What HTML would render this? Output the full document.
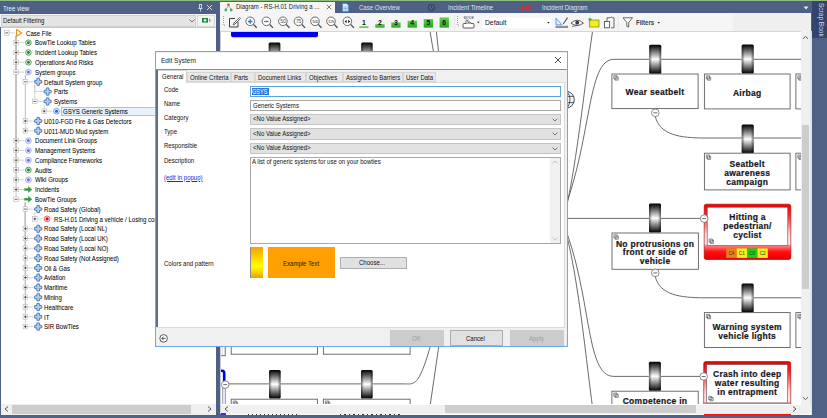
<!DOCTYPE html><html><head><meta charset="utf-8"><style>
*{margin:0;padding:0;box-sizing:border-box}
html,body{width:827px;height:418px;overflow:hidden;background:#4e6083;font-family:"Liberation Sans", sans-serif;font-size:6.2px;color:#1e1e1e}
.ab{position:absolute}
.t{position:absolute;white-space:nowrap;line-height:1}
.s{transform:scaleX(0.86);transform-origin:0 0}
</style></head><body>
<div class="ab" style="left:0px;top:0px;width:827px;height:1px;background:#8cbf7a"></div><div class="t" style="left:3.2px;top:5.6px;color:#f0f3f8;font-size:7.1px;transform:scaleX(0.86);transform-origin:0 0">Tree view</div><svg class="ab" style="left:196px;top:3px" width="20" height="10" viewBox="0 0 20 10"><path d="M3 1.5h3M3.5 1.5v4M5.5 1.5v4M2.5 5.5h4M4.5 5.5v3" stroke="#e8ecf2" stroke-width="0.8" fill="none"/><path d="M11 2l5 5M16 2l-5 5" stroke="#e8ecf2" stroke-width="0.9"/></svg><div class="ab" style="left:0px;top:14.4px;width:215.8px;height:12.6px;background:#f3f3f3"></div><div class="ab" style="left:1px;top:14.5px;width:195px;height:12px;background:#e4e4e4;border:1px solid #d0d0d0"></div><div class="t" style="left:3.2px;top:17.9px;font-size:7.1px;transform:scaleX(0.83);transform-origin:0 0;color:#111">Default Filtering</div><svg class="ab" style="left:189px;top:19px" width="6" height="4" viewBox="0 0 6 4"><path d="M0.5 0.5L3 3L5.5 0.5" stroke="#444" stroke-width="0.7" fill="none"/></svg><div class="ab" style="left:197px;top:14.5px;width:18px;height:12px;background:#f2f2f2;border:1px solid #d8d8d8"></div><svg class="ab" style="left:202px;top:17.8px" width="10" height="6" viewBox="0 0 10 6"><rect x="0" y="0" width="6" height="4.6" fill="#1f8a3a"/><rect x="1.8" y="1.3" width="2.4" height="2" fill="#fff"/><rect x="7" y="0.8" width="1.4" height="3" fill="#5cb85c"/></svg><div class="ab" style="left:1px;top:27px;width:214.8px;height:377px;background:#fff;border-top:1px solid #c8c8c8"></div><div class="ab" style="left:1px;top:404px;width:214.8px;height:10.5px;background:#f0f0f0"></div><div class="ab" style="left:11.5px;top:405px;width:179px;height:8.5px;background:#cdcdcd"></div><svg class="ab" style="left:4px;top:406px" width="5" height="6" viewBox="0 0 5 6"><path d="M4 0.5L1 3L4 5.5" stroke="#555" stroke-width="1" fill="none"/></svg><svg class="ab" style="left:207px;top:406px" width="5" height="6" viewBox="0 0 5 6"><path d="M1 0.5L4 3L1 5.5" stroke="#555" stroke-width="1" fill="none"/></svg><div class="t" style="left:25.5px;top:30.599999999999998px;font-size:7.1px;transform:scaleX(0.855);transform-origin:0 0;color:#000;-webkit-text-stroke:0.04px #000">Case File</div><div class="t" style="left:34.870000000000005px;top:40.39px;font-size:7.1px;transform:scaleX(0.855);transform-origin:0 0;color:#000;-webkit-text-stroke:0.04px #000">BowTie Lookup Tables</div><div class="t" style="left:34.870000000000005px;top:50.18px;font-size:7.1px;transform:scaleX(0.855);transform-origin:0 0;color:#000;-webkit-text-stroke:0.04px #000">Incident Lookup Tables</div><div class="t" style="left:34.870000000000005px;top:59.97px;font-size:7.1px;transform:scaleX(0.855);transform-origin:0 0;color:#000;-webkit-text-stroke:0.04px #000">Operations And Risks</div><div class="t" style="left:34.870000000000005px;top:69.76px;font-size:7.1px;transform:scaleX(0.855);transform-origin:0 0;color:#000;-webkit-text-stroke:0.04px #000">System groups</div><div class="t" style="left:44.239999999999995px;top:79.55px;font-size:7.1px;transform:scaleX(0.855);transform-origin:0 0;color:#000;-webkit-text-stroke:0.04px #000">Default System group</div><div class="t" style="left:53.61px;top:89.33999999999999px;font-size:7.1px;transform:scaleX(0.855);transform-origin:0 0;color:#000;-webkit-text-stroke:0.04px #000">Parts</div><div class="t" style="left:53.61px;top:99.13000000000001px;font-size:7.1px;transform:scaleX(0.855);transform-origin:0 0;color:#000;-webkit-text-stroke:0.04px #000">Systems</div><div class="ab" style="left:61px;top:107.3px;width:96px;height:8.6px;background:#e5f1fb;border:0.6px solid #99c9ef"></div><div class="t" style="left:62.980000000000004px;top:108.92px;font-size:7.1px;transform:scaleX(0.855);transform-origin:0 0;color:#000;-webkit-text-stroke:0.04px #000">GSYS Generic Systems</div><div class="t" style="left:44.239999999999995px;top:118.71px;font-size:7.1px;transform:scaleX(0.855);transform-origin:0 0;color:#000;-webkit-text-stroke:0.04px #000">U010-FGD Fire &amp; Gas Detectors</div><div class="t" style="left:44.239999999999995px;top:128.49999999999997px;font-size:7.1px;transform:scaleX(0.855);transform-origin:0 0;color:#000;-webkit-text-stroke:0.04px #000">U011-MUD Mud system</div><div class="t" style="left:34.870000000000005px;top:138.29px;font-size:7.1px;transform:scaleX(0.855);transform-origin:0 0;color:#000;-webkit-text-stroke:0.04px #000">Document Link Groups</div><div class="t" style="left:34.870000000000005px;top:148.07999999999998px;font-size:7.1px;transform:scaleX(0.855);transform-origin:0 0;color:#000;-webkit-text-stroke:0.04px #000">Management Systems</div><div class="t" style="left:34.870000000000005px;top:157.86999999999998px;font-size:7.1px;transform:scaleX(0.855);transform-origin:0 0;color:#000;-webkit-text-stroke:0.04px #000">Compliance Frameworks</div><div class="t" style="left:34.870000000000005px;top:167.66px;font-size:7.1px;transform:scaleX(0.855);transform-origin:0 0;color:#000;-webkit-text-stroke:0.04px #000">Audits</div><div class="t" style="left:34.870000000000005px;top:177.45px;font-size:7.1px;transform:scaleX(0.855);transform-origin:0 0;color:#000;-webkit-text-stroke:0.04px #000">Wiki Groups</div><div class="t" style="left:34.870000000000005px;top:187.23999999999998px;font-size:7.1px;transform:scaleX(0.855);transform-origin:0 0;color:#000;-webkit-text-stroke:0.04px #000">Incidents</div><div class="t" style="left:34.870000000000005px;top:197.02999999999997px;font-size:7.1px;transform:scaleX(0.855);transform-origin:0 0;color:#000;-webkit-text-stroke:0.04px #000">BowTie Groups</div><div class="t" style="left:44.239999999999995px;top:206.81999999999996px;font-size:7.1px;transform:scaleX(0.855);transform-origin:0 0;color:#000;-webkit-text-stroke:0.04px #000">Road Safety (Global)</div><div class="t" style="left:53.61px;top:216.60999999999999px;font-size:7.1px;transform:scaleX(0.855);transform-origin:0 0;color:#000;-webkit-text-stroke:0.04px #000">RS-H.01 Driving a vehicle / Losing control</div><div class="t" style="left:44.239999999999995px;top:226.39999999999998px;font-size:7.1px;transform:scaleX(0.855);transform-origin:0 0;color:#000;-webkit-text-stroke:0.04px #000">Road Safety (Local NL)</div><div class="t" style="left:44.239999999999995px;top:236.18999999999997px;font-size:7.1px;transform:scaleX(0.855);transform-origin:0 0;color:#000;-webkit-text-stroke:0.04px #000">Road Safety (Local UK)</div><div class="t" style="left:44.239999999999995px;top:245.98px;font-size:7.1px;transform:scaleX(0.855);transform-origin:0 0;color:#000;-webkit-text-stroke:0.04px #000">Road Safety (Local NO)</div><div class="t" style="left:44.239999999999995px;top:255.76999999999998px;font-size:7.1px;transform:scaleX(0.855);transform-origin:0 0;color:#000;-webkit-text-stroke:0.04px #000">Road Safety (Not Assigned)</div><div class="t" style="left:44.239999999999995px;top:265.55999999999995px;font-size:7.1px;transform:scaleX(0.855);transform-origin:0 0;color:#000;-webkit-text-stroke:0.04px #000">Oil &amp; Gas</div><div class="t" style="left:44.239999999999995px;top:275.34999999999997px;font-size:7.1px;transform:scaleX(0.855);transform-origin:0 0;color:#000;-webkit-text-stroke:0.04px #000">Aviation</div><div class="t" style="left:44.239999999999995px;top:285.13999999999993px;font-size:7.1px;transform:scaleX(0.855);transform-origin:0 0;color:#000;-webkit-text-stroke:0.04px #000">Maritime</div><div class="t" style="left:44.239999999999995px;top:294.92999999999995px;font-size:7.1px;transform:scaleX(0.855);transform-origin:0 0;color:#000;-webkit-text-stroke:0.04px #000">Mining</div><div class="t" style="left:44.239999999999995px;top:304.71999999999997px;font-size:7.1px;transform:scaleX(0.855);transform-origin:0 0;color:#000;-webkit-text-stroke:0.04px #000">Healthcare</div><div class="t" style="left:44.239999999999995px;top:314.50999999999993px;font-size:7.1px;transform:scaleX(0.855);transform-origin:0 0;color:#000;-webkit-text-stroke:0.04px #000">IT</div><div class="t" style="left:44.239999999999995px;top:324.29999999999995px;font-size:7.1px;transform:scaleX(0.855);transform-origin:0 0;color:#000;-webkit-text-stroke:0.04px #000">SIR BowTies</div><svg class="ab" style="left:0;top:0" width="216" height="404" viewBox="0 0 216 404"><path d="M6.7 32.9H14.7" stroke="#c2c2c2" stroke-width="0.7"/><path d="M16.1 35.9V42.7" stroke="#c2c2c2" stroke-width="0.7"/><path d="M16.1 42.7H24.1" stroke="#c2c2c2" stroke-width="0.7"/><path d="M16.1 35.9V52.5" stroke="#c2c2c2" stroke-width="0.7"/><path d="M16.1 52.5H24.1" stroke="#c2c2c2" stroke-width="0.7"/><path d="M16.1 35.9V62.3" stroke="#c2c2c2" stroke-width="0.7"/><path d="M16.1 62.3H24.1" stroke="#c2c2c2" stroke-width="0.7"/><path d="M16.1 35.9V72.1" stroke="#c2c2c2" stroke-width="0.7"/><path d="M16.1 72.1H24.1" stroke="#c2c2c2" stroke-width="0.7"/><path d="M25.4 75.1V81.8" stroke="#c2c2c2" stroke-width="0.7"/><path d="M25.4 81.8H33.4" stroke="#c2c2c2" stroke-width="0.7"/><path d="M34.8 84.8V91.6" stroke="#c2c2c2" stroke-width="0.7"/><path d="M34.8 91.6H42.8" stroke="#c2c2c2" stroke-width="0.7"/><path d="M34.8 84.8V101.4" stroke="#c2c2c2" stroke-width="0.7"/><path d="M34.8 101.4H42.8" stroke="#c2c2c2" stroke-width="0.7"/><path d="M44.2 104.4V111.2" stroke="#c2c2c2" stroke-width="0.7"/><path d="M44.2 111.2H52.2" stroke="#c2c2c2" stroke-width="0.7"/><path d="M25.4 75.1V121.0" stroke="#c2c2c2" stroke-width="0.7"/><path d="M25.4 121.0H33.4" stroke="#c2c2c2" stroke-width="0.7"/><path d="M25.4 75.1V130.8" stroke="#c2c2c2" stroke-width="0.7"/><path d="M25.4 130.8H33.4" stroke="#c2c2c2" stroke-width="0.7"/><path d="M16.1 35.9V140.6" stroke="#c2c2c2" stroke-width="0.7"/><path d="M16.1 140.6H24.1" stroke="#c2c2c2" stroke-width="0.7"/><path d="M16.1 35.9V150.4" stroke="#c2c2c2" stroke-width="0.7"/><path d="M16.1 150.4H24.1" stroke="#c2c2c2" stroke-width="0.7"/><path d="M16.1 35.9V160.2" stroke="#c2c2c2" stroke-width="0.7"/><path d="M16.1 160.2H24.1" stroke="#c2c2c2" stroke-width="0.7"/><path d="M16.1 35.9V170.0" stroke="#c2c2c2" stroke-width="0.7"/><path d="M16.1 170.0H24.1" stroke="#c2c2c2" stroke-width="0.7"/><path d="M16.1 35.9V179.8" stroke="#c2c2c2" stroke-width="0.7"/><path d="M16.1 179.8H24.1" stroke="#c2c2c2" stroke-width="0.7"/><path d="M16.1 35.9V189.5" stroke="#c2c2c2" stroke-width="0.7"/><path d="M16.1 189.5H24.1" stroke="#c2c2c2" stroke-width="0.7"/><path d="M16.1 35.9V199.3" stroke="#c2c2c2" stroke-width="0.7"/><path d="M16.1 199.3H24.1" stroke="#c2c2c2" stroke-width="0.7"/><path d="M25.4 202.3V209.1" stroke="#c2c2c2" stroke-width="0.7"/><path d="M25.4 209.1H33.4" stroke="#c2c2c2" stroke-width="0.7"/><path d="M34.8 212.1V218.9" stroke="#c2c2c2" stroke-width="0.7"/><path d="M34.8 218.9H42.8" stroke="#c2c2c2" stroke-width="0.7"/><path d="M25.4 202.3V228.7" stroke="#c2c2c2" stroke-width="0.7"/><path d="M25.4 228.7H33.4" stroke="#c2c2c2" stroke-width="0.7"/><path d="M25.4 202.3V238.5" stroke="#c2c2c2" stroke-width="0.7"/><path d="M25.4 238.5H33.4" stroke="#c2c2c2" stroke-width="0.7"/><path d="M25.4 202.3V248.3" stroke="#c2c2c2" stroke-width="0.7"/><path d="M25.4 248.3H33.4" stroke="#c2c2c2" stroke-width="0.7"/><path d="M25.4 202.3V258.1" stroke="#c2c2c2" stroke-width="0.7"/><path d="M25.4 258.1H33.4" stroke="#c2c2c2" stroke-width="0.7"/><path d="M25.4 202.3V267.9" stroke="#c2c2c2" stroke-width="0.7"/><path d="M25.4 267.9H33.4" stroke="#c2c2c2" stroke-width="0.7"/><path d="M25.4 202.3V277.6" stroke="#c2c2c2" stroke-width="0.7"/><path d="M25.4 277.6H33.4" stroke="#c2c2c2" stroke-width="0.7"/><path d="M25.4 202.3V287.4" stroke="#c2c2c2" stroke-width="0.7"/><path d="M25.4 287.4H33.4" stroke="#c2c2c2" stroke-width="0.7"/><path d="M25.4 202.3V297.2" stroke="#c2c2c2" stroke-width="0.7"/><path d="M25.4 297.2H33.4" stroke="#c2c2c2" stroke-width="0.7"/><path d="M25.4 202.3V307.0" stroke="#c2c2c2" stroke-width="0.7"/><path d="M25.4 307.0H33.4" stroke="#c2c2c2" stroke-width="0.7"/><path d="M25.4 202.3V316.8" stroke="#c2c2c2" stroke-width="0.7"/><path d="M25.4 316.8H33.4" stroke="#c2c2c2" stroke-width="0.7"/><path d="M25.4 202.3V326.6" stroke="#c2c2c2" stroke-width="0.7"/><path d="M25.4 326.6H33.4" stroke="#c2c2c2" stroke-width="0.7"/><rect x="4.4" y="30.6" width="4.6" height="4.6" fill="#fff" stroke="#a9a9a9" stroke-width="0.5"/><path d="M5.3 32.9H8.1" stroke="#222" stroke-width="0.7"/><path d="M16.5 29.6L21.8 32.9L16.5 36.2Z" fill="none" stroke="#e8962a" stroke-width="1.2" stroke-linejoin="round"/><rect x="13.8" y="40.4" width="4.6" height="4.6" fill="#fff" stroke="#a9a9a9" stroke-width="0.5"/><path d="M14.7 42.7H17.5" stroke="#222" stroke-width="0.7"/><path d="M16.1 41.3V44.1" stroke="#222" stroke-width="0.7"/><circle cx="28.4" cy="42.7" r="2.8" fill="#e3f1e3" stroke="#3b9a48" stroke-width="0.9"/><circle cx="28.4" cy="42.7" r="1.4" fill="#1f7a2c"/><rect x="13.8" y="50.2" width="4.6" height="4.6" fill="#fff" stroke="#a9a9a9" stroke-width="0.5"/><path d="M14.7 52.5H17.5" stroke="#222" stroke-width="0.7"/><path d="M16.1 51.1V53.9" stroke="#222" stroke-width="0.7"/><circle cx="28.4" cy="52.5" r="2.8" fill="#e3f1e3" stroke="#3b9a48" stroke-width="0.9"/><circle cx="28.4" cy="52.5" r="1.4" fill="#1f7a2c"/><rect x="13.8" y="60.0" width="4.6" height="4.6" fill="#fff" stroke="#a9a9a9" stroke-width="0.5"/><path d="M14.7 62.3H17.5" stroke="#222" stroke-width="0.7"/><path d="M16.1 60.9V63.7" stroke="#222" stroke-width="0.7"/><circle cx="28.4" cy="62.3" r="2.8" fill="#e3f1e3" stroke="#3b9a48" stroke-width="0.9"/><circle cx="28.4" cy="62.3" r="1.4" fill="#1f7a2c"/><rect x="13.8" y="69.8" width="4.6" height="4.6" fill="#fff" stroke="#a9a9a9" stroke-width="0.5"/><path d="M14.7 72.1H17.5" stroke="#222" stroke-width="0.7"/><circle cx="28.4" cy="72.1" r="2.9" fill="#e6e8ff" stroke="#9aa2f2" stroke-width="0.8"/><circle cx="28.4" cy="72.1" r="1.5" fill="#6b6ff0"/><rect x="23.1" y="79.5" width="4.6" height="4.6" fill="#fff" stroke="#a9a9a9" stroke-width="0.5"/><path d="M24.0 81.8H26.8" stroke="#222" stroke-width="0.7"/><path d="M38.2 79.5v4.6M35.9 81.8h4.6" stroke="#4f7fb8" stroke-width="3.9" stroke-linecap="round"/><path d="M38.2 79.5v4.6M35.9 81.8h4.6" stroke="#b3cdea" stroke-width="1.9" stroke-linecap="round"/><path d="M47.6 89.3v4.6M45.3 91.6h4.6" stroke="#4f7fb8" stroke-width="3.9" stroke-linecap="round"/><path d="M47.6 89.3v4.6M45.3 91.6h4.6" stroke="#b3cdea" stroke-width="1.9" stroke-linecap="round"/><rect x="32.5" y="99.1" width="4.6" height="4.6" fill="#fff" stroke="#a9a9a9" stroke-width="0.5"/><path d="M33.4 101.4H36.2" stroke="#222" stroke-width="0.7"/><path d="M47.6 99.1v4.6M45.3 101.4h4.6" stroke="#4f7fb8" stroke-width="3.9" stroke-linecap="round"/><path d="M47.6 99.1v4.6M45.3 101.4h4.6" stroke="#b3cdea" stroke-width="1.9" stroke-linecap="round"/><rect x="41.9" y="108.9" width="4.6" height="4.6" fill="#fff" stroke="#a9a9a9" stroke-width="0.5"/><path d="M42.8 111.2H45.6" stroke="#222" stroke-width="0.7"/><path d="M44.2 109.8V112.6" stroke="#222" stroke-width="0.7"/><circle cx="56.5" cy="111.2" r="2.9" fill="#e6eeff" stroke="#5b8be0" stroke-width="0.8"/><circle cx="56.5" cy="111.2" r="1.5" fill="#2a5fd0"/><rect x="23.1" y="118.7" width="4.6" height="4.6" fill="#fff" stroke="#a9a9a9" stroke-width="0.5"/><path d="M24.0 121.0H26.8" stroke="#222" stroke-width="0.7"/><path d="M25.4 119.6V122.4" stroke="#222" stroke-width="0.7"/><path d="M38.2 118.7v4.6M35.9 121.0h4.6" stroke="#4f7fb8" stroke-width="3.9" stroke-linecap="round"/><path d="M38.2 118.7v4.6M35.9 121.0h4.6" stroke="#b3cdea" stroke-width="1.9" stroke-linecap="round"/><rect x="23.1" y="128.5" width="4.6" height="4.6" fill="#fff" stroke="#a9a9a9" stroke-width="0.5"/><path d="M24.0 130.8H26.8" stroke="#222" stroke-width="0.7"/><path d="M25.4 129.4V132.2" stroke="#222" stroke-width="0.7"/><path d="M38.2 128.5v4.6M35.9 130.8h4.6" stroke="#4f7fb8" stroke-width="3.9" stroke-linecap="round"/><path d="M38.2 128.5v4.6M35.9 130.8h4.6" stroke="#b3cdea" stroke-width="1.9" stroke-linecap="round"/><rect x="13.8" y="138.3" width="4.6" height="4.6" fill="#fff" stroke="#a9a9a9" stroke-width="0.5"/><path d="M14.7 140.6H17.5" stroke="#222" stroke-width="0.7"/><path d="M16.1 139.2V142.0" stroke="#222" stroke-width="0.7"/><circle cx="28.4" cy="140.6" r="2.9" fill="#e6e8ff" stroke="#9aa2f2" stroke-width="0.8"/><circle cx="28.4" cy="140.6" r="1.5" fill="#6b6ff0"/><rect x="13.8" y="148.1" width="4.6" height="4.6" fill="#fff" stroke="#a9a9a9" stroke-width="0.5"/><path d="M14.7 150.4H17.5" stroke="#222" stroke-width="0.7"/><path d="M16.1 149.0V151.8" stroke="#222" stroke-width="0.7"/><circle cx="28.4" cy="150.4" r="2.9" fill="#e6e8ff" stroke="#9aa2f2" stroke-width="0.8"/><circle cx="28.4" cy="150.4" r="1.5" fill="#6b6ff0"/><rect x="13.8" y="157.9" width="4.6" height="4.6" fill="#fff" stroke="#a9a9a9" stroke-width="0.5"/><path d="M14.7 160.2H17.5" stroke="#222" stroke-width="0.7"/><path d="M16.1 158.8V161.6" stroke="#222" stroke-width="0.7"/><circle cx="28.4" cy="160.2" r="2.9" fill="#e6e8ff" stroke="#9aa2f2" stroke-width="0.8"/><circle cx="28.4" cy="160.2" r="1.5" fill="#6b6ff0"/><rect x="13.8" y="167.7" width="4.6" height="4.6" fill="#fff" stroke="#a9a9a9" stroke-width="0.5"/><path d="M14.7 170.0H17.5" stroke="#222" stroke-width="0.7"/><path d="M16.1 168.6V171.4" stroke="#222" stroke-width="0.7"/><circle cx="28.4" cy="170.0" r="2.8" fill="#e3f1e3" stroke="#3b9a48" stroke-width="0.9"/><circle cx="28.4" cy="170.0" r="1.4" fill="#1f7a2c"/><rect x="13.8" y="177.4" width="4.6" height="4.6" fill="#fff" stroke="#a9a9a9" stroke-width="0.5"/><path d="M14.7 179.8H17.5" stroke="#222" stroke-width="0.7"/><path d="M16.1 178.3V181.2" stroke="#222" stroke-width="0.7"/><circle cx="28.4" cy="179.8" r="2.9" fill="#e6e8ff" stroke="#9aa2f2" stroke-width="0.8"/><circle cx="28.4" cy="179.8" r="1.5" fill="#6b6ff0"/><rect x="13.8" y="187.2" width="4.6" height="4.6" fill="#fff" stroke="#a9a9a9" stroke-width="0.5"/><path d="M14.7 189.5H17.5" stroke="#222" stroke-width="0.7"/><path d="M16.1 188.1V190.9" stroke="#222" stroke-width="0.7"/><path d="M24.4 188.5h4v-2l3.5 3l-3.5 3v-2h-4z" fill="#2ea043" stroke="#1f7a2c" stroke-width="0.3"/><rect x="13.8" y="197.0" width="4.6" height="4.6" fill="#fff" stroke="#a9a9a9" stroke-width="0.5"/><path d="M14.7 199.3H17.5" stroke="#222" stroke-width="0.7"/><path d="M24.4 198.3h4v-2l3.5 3l-3.5 3v-2h-4z" fill="#2ea043" stroke="#1f7a2c" stroke-width="0.3"/><rect x="23.1" y="206.8" width="4.6" height="4.6" fill="#fff" stroke="#a9a9a9" stroke-width="0.5"/><path d="M24.0 209.1H26.8" stroke="#222" stroke-width="0.7"/><path d="M38.2 206.8v4.6M35.9 209.1h4.6" stroke="#4f7fb8" stroke-width="3.9" stroke-linecap="round"/><path d="M38.2 206.8v4.6M35.9 209.1h4.6" stroke="#b3cdea" stroke-width="1.9" stroke-linecap="round"/><rect x="32.5" y="216.6" width="4.6" height="4.6" fill="#fff" stroke="#a9a9a9" stroke-width="0.5"/><path d="M33.4 218.9H36.2" stroke="#222" stroke-width="0.7"/><path d="M34.8 217.5V220.3" stroke="#222" stroke-width="0.7"/><circle cx="47.1" cy="218.9" r="2.9" fill="#ffe6e6" stroke="#e05050" stroke-width="0.8"/><circle cx="47.1" cy="218.9" r="1.6" fill="#e01010"/><rect x="23.1" y="226.4" width="4.6" height="4.6" fill="#fff" stroke="#a9a9a9" stroke-width="0.5"/><path d="M24.0 228.7H26.8" stroke="#222" stroke-width="0.7"/><path d="M25.4 227.3V230.1" stroke="#222" stroke-width="0.7"/><path d="M38.2 226.4v4.6M35.9 228.7h4.6" stroke="#4f7fb8" stroke-width="3.9" stroke-linecap="round"/><path d="M38.2 226.4v4.6M35.9 228.7h4.6" stroke="#b3cdea" stroke-width="1.9" stroke-linecap="round"/><rect x="23.1" y="236.2" width="4.6" height="4.6" fill="#fff" stroke="#a9a9a9" stroke-width="0.5"/><path d="M24.0 238.5H26.8" stroke="#222" stroke-width="0.7"/><path d="M25.4 237.1V239.9" stroke="#222" stroke-width="0.7"/><path d="M38.2 236.2v4.6M35.9 238.5h4.6" stroke="#4f7fb8" stroke-width="3.9" stroke-linecap="round"/><path d="M38.2 236.2v4.6M35.9 238.5h4.6" stroke="#b3cdea" stroke-width="1.9" stroke-linecap="round"/><rect x="23.1" y="246.0" width="4.6" height="4.6" fill="#fff" stroke="#a9a9a9" stroke-width="0.5"/><path d="M24.0 248.3H26.8" stroke="#222" stroke-width="0.7"/><path d="M25.4 246.9V249.7" stroke="#222" stroke-width="0.7"/><path d="M38.2 246.0v4.6M35.9 248.3h4.6" stroke="#4f7fb8" stroke-width="3.9" stroke-linecap="round"/><path d="M38.2 246.0v4.6M35.9 248.3h4.6" stroke="#b3cdea" stroke-width="1.9" stroke-linecap="round"/><rect x="23.1" y="255.8" width="4.6" height="4.6" fill="#fff" stroke="#a9a9a9" stroke-width="0.5"/><path d="M24.0 258.1H26.8" stroke="#222" stroke-width="0.7"/><path d="M25.4 256.7V259.5" stroke="#222" stroke-width="0.7"/><path d="M38.2 255.8v4.6M35.9 258.1h4.6" stroke="#4f7fb8" stroke-width="3.9" stroke-linecap="round"/><path d="M38.2 255.8v4.6M35.9 258.1h4.6" stroke="#b3cdea" stroke-width="1.9" stroke-linecap="round"/><rect x="23.1" y="265.6" width="4.6" height="4.6" fill="#fff" stroke="#a9a9a9" stroke-width="0.5"/><path d="M24.0 267.9H26.8" stroke="#222" stroke-width="0.7"/><path d="M25.4 266.5V269.3" stroke="#222" stroke-width="0.7"/><path d="M38.2 265.6v4.6M35.9 267.9h4.6" stroke="#4f7fb8" stroke-width="3.9" stroke-linecap="round"/><path d="M38.2 265.6v4.6M35.9 267.9h4.6" stroke="#b3cdea" stroke-width="1.9" stroke-linecap="round"/><rect x="23.1" y="275.3" width="4.6" height="4.6" fill="#fff" stroke="#a9a9a9" stroke-width="0.5"/><path d="M24.0 277.6H26.8" stroke="#222" stroke-width="0.7"/><path d="M25.4 276.2V279.0" stroke="#222" stroke-width="0.7"/><path d="M38.2 275.3v4.6M35.9 277.6h4.6" stroke="#4f7fb8" stroke-width="3.9" stroke-linecap="round"/><path d="M38.2 275.3v4.6M35.9 277.6h4.6" stroke="#b3cdea" stroke-width="1.9" stroke-linecap="round"/><rect x="23.1" y="285.1" width="4.6" height="4.6" fill="#fff" stroke="#a9a9a9" stroke-width="0.5"/><path d="M24.0 287.4H26.8" stroke="#222" stroke-width="0.7"/><path d="M25.4 286.0V288.8" stroke="#222" stroke-width="0.7"/><path d="M38.2 285.1v4.6M35.9 287.4h4.6" stroke="#4f7fb8" stroke-width="3.9" stroke-linecap="round"/><path d="M38.2 285.1v4.6M35.9 287.4h4.6" stroke="#b3cdea" stroke-width="1.9" stroke-linecap="round"/><rect x="23.1" y="294.9" width="4.6" height="4.6" fill="#fff" stroke="#a9a9a9" stroke-width="0.5"/><path d="M24.0 297.2H26.8" stroke="#222" stroke-width="0.7"/><path d="M25.4 295.8V298.6" stroke="#222" stroke-width="0.7"/><path d="M38.2 294.9v4.6M35.9 297.2h4.6" stroke="#4f7fb8" stroke-width="3.9" stroke-linecap="round"/><path d="M38.2 294.9v4.6M35.9 297.2h4.6" stroke="#b3cdea" stroke-width="1.9" stroke-linecap="round"/><rect x="23.1" y="304.7" width="4.6" height="4.6" fill="#fff" stroke="#a9a9a9" stroke-width="0.5"/><path d="M24.0 307.0H26.8" stroke="#222" stroke-width="0.7"/><path d="M25.4 305.6V308.4" stroke="#222" stroke-width="0.7"/><path d="M38.2 304.7v4.6M35.9 307.0h4.6" stroke="#4f7fb8" stroke-width="3.9" stroke-linecap="round"/><path d="M38.2 304.7v4.6M35.9 307.0h4.6" stroke="#b3cdea" stroke-width="1.9" stroke-linecap="round"/><rect x="23.1" y="314.5" width="4.6" height="4.6" fill="#fff" stroke="#a9a9a9" stroke-width="0.5"/><path d="M24.0 316.8H26.8" stroke="#222" stroke-width="0.7"/><path d="M25.4 315.4V318.2" stroke="#222" stroke-width="0.7"/><path d="M38.2 314.5v4.6M35.9 316.8h4.6" stroke="#4f7fb8" stroke-width="3.9" stroke-linecap="round"/><path d="M38.2 314.5v4.6M35.9 316.8h4.6" stroke="#b3cdea" stroke-width="1.9" stroke-linecap="round"/><rect x="23.1" y="324.3" width="4.6" height="4.6" fill="#fff" stroke="#a9a9a9" stroke-width="0.5"/><path d="M24.0 326.6H26.8" stroke="#222" stroke-width="0.7"/><path d="M25.4 325.2V328.0" stroke="#222" stroke-width="0.7"/><path d="M38.2 324.3v4.6M35.9 326.6h4.6" stroke="#4f7fb8" stroke-width="3.9" stroke-linecap="round"/><path d="M38.2 324.3v4.6M35.9 326.6h4.6" stroke="#b3cdea" stroke-width="1.9" stroke-linecap="round"/></svg><div class="ab" style="left:219.8px;top:1.8px;width:115px;height:12px;background:#f5f5f5"></div><svg class="ab" style="left:224px;top:3px" width="9" height="9" viewBox="0 0 9 9"><circle cx="4.5" cy="1.8" r="1.3" fill="#e04b2a"/><path d="M4.5 2.5L2 6.5M4.5 2.5L7 6.5" stroke="#777" stroke-width="0.6"/><circle cx="1.8" cy="7" r="1.4" fill="#3cb371"/><circle cx="7.2" cy="7" r="1.4" fill="#3cb371"/></svg><div class="t" style="left:235.5px;top:3.4px;font-size:7px;transform:scaleX(0.86);transform-origin:0 0;color:#222">Diagram - RS-H.01 Driving a ...</div><svg class="ab" style="left:326px;top:4px" width="6" height="6" viewBox="0 0 6 6"><path d="M0.8 0.8L5.2 5.2M5.2 0.8L0.8 5.2" stroke="#806a40" stroke-width="0.9"/></svg><svg class="ab" style="left:342px;top:3px" width="7" height="9" viewBox="0 0 7 9"><path d="M0.5 0.5h4l2 2v6h-6z" fill="#dce9f7" stroke="#4b86c8" stroke-width="0.7"/><path d="M1.5 4h4M1.5 5.5h4M1.5 7h4" stroke="#4b86c8" stroke-width="0.5"/></svg><div class="t" style="left:358.5px;top:3.8px;font-size:7px;transform:scaleX(0.86);transform-origin:0 0;color:#dfe5ee">Case Overview</div><svg class="ab" style="left:427px;top:3px" width="9" height="9" viewBox="0 0 9 9"><circle cx="4.5" cy="4.5" r="3.3" fill="none" stroke="#2e3a50" stroke-width="0.9"/><path d="M4.5 2.5v2.2l1.5 1" stroke="#2e3a50" stroke-width="0.8" fill="none"/></svg><div class="t" style="left:447.5px;top:3.8px;font-size:7px;transform:scaleX(0.86);transform-origin:0 0;color:#dfe5ee">Incident Timeline</div><svg class="ab" style="left:521px;top:3.5px" width="10" height="8" viewBox="0 0 10 8"><path d="M0.5 0.5L5 4L0.5 7.5zM9.5 0.5L5 4L9.5 7.5z" fill="#d0302a"/><rect x="4" y="2.5" width="2" height="3" fill="#d0302a"/></svg><div class="t" style="left:542px;top:3.8px;font-size:7px;transform:scaleX(0.86);transform-origin:0 0;color:#dfe5ee">Incident Diagram</div><svg class="ab" style="left:803px;top:6px" width="6" height="4" viewBox="0 0 6 4"><path d="M0.5 0.5h5L3 3.5z" fill="#e8ecf2"/></svg><div class="ab" style="left:220px;top:12.7px;width:591px;height:18.3px;background:#f5f5f5"></div><div class="ab" style="left:733px;top:12.7px;width:78px;height:18.3px;background:#efefef"></div><div class="ab" style="left:220px;top:30.5px;width:591px;height:1px;background:#e2e2e2"></div><svg class="ab" style="left:0;top:0" width="827" height="32" viewBox="0 0 827 32"><defs><linearGradient id="gg" x1="0" y1="0" x2="0" y2="1"><stop offset="0" stop-color="#5fd34a"/><stop offset="1" stop-color="#22a51c"/></linearGradient></defs><rect x="223.0" y="16" width="0.9" height="0.9" fill="#8a8a8a"/><rect x="223.0" y="18" width="0.9" height="0.9" fill="#8a8a8a"/><rect x="223.0" y="20" width="0.9" height="0.9" fill="#8a8a8a"/><rect x="223.0" y="22" width="0.9" height="0.9" fill="#8a8a8a"/><path d="M222.5 24.5h2v2" stroke="#999" stroke-width="0.5" fill="none"/><path d="M235 18.5H229.5V27H238V21.5" fill="none" stroke="#404040" stroke-width="1"/><path d="M239.5 17.5L234 23l-0.8 1.8l1.8-0.8l5.5-5.5z" fill="#fff" stroke="#404040" stroke-width="0.8"/><circle cx="250.2" cy="21.3" r="4.3" fill="#fff" stroke="#5a5a5a" stroke-width="0.9"/><path d="M253.4 24.4l3.3 3.3" stroke="#4a4a4a" stroke-width="1.3"/><path d="M250.2 19.3v4.4M248 21.5h4.4" stroke="#2a7ad8" stroke-width="1.3"/><circle cx="266.4" cy="21.3" r="4.3" fill="#fff" stroke="#5a5a5a" stroke-width="0.9"/><path d="M269.6 24.4l3.3 3.3" stroke="#4a4a4a" stroke-width="1.3"/><path d="M264.2 21.5h4.4" stroke="#2a7ad8" stroke-width="1.3"/><circle cx="282.9" cy="21.3" r="4.3" fill="#fff" stroke="#5a5a5a" stroke-width="0.9"/><path d="M286.1 24.4l3.3 3.3" stroke="#4a4a4a" stroke-width="1.3"/><text x="282.9" y="23.2" font-size="5" text-anchor="middle" fill="#555" font-family="Liberation Sans" letter-spacing="-0.25" stroke="#555" stroke-width="0.05">50</text><circle cx="298.5" cy="21.3" r="4.3" fill="#fff" stroke="#5a5a5a" stroke-width="0.9"/><path d="M301.7 24.4l3.3 3.3" stroke="#4a4a4a" stroke-width="1.3"/><text x="298.5" y="23.2" font-size="5" text-anchor="middle" fill="#555" font-family="Liberation Sans" letter-spacing="-0.25" stroke="#555" stroke-width="0.05">75</text><circle cx="315.0" cy="21.3" r="4.3" fill="#fff" stroke="#5a5a5a" stroke-width="0.9"/><path d="M318.2 24.4l3.3 3.3" stroke="#4a4a4a" stroke-width="1.3"/><text x="315.0" y="22.9" font-size="4.2" text-anchor="middle" fill="#555" font-family="Liberation Sans" letter-spacing="-0.25" stroke="#555" stroke-width="0.05">100</text><circle cx="331.0" cy="21.3" r="4.3" fill="#fff" stroke="#5a5a5a" stroke-width="0.9"/><path d="M334.2 24.4l3.3 3.3" stroke="#4a4a4a" stroke-width="1.3"/><text x="331.0" y="22.9" font-size="4.2" text-anchor="middle" fill="#555" font-family="Liberation Sans" letter-spacing="-0.25" stroke="#555" stroke-width="0.05">125</text><circle cx="347.4" cy="21.3" r="4.3" fill="#fff" stroke="#5a5a5a" stroke-width="0.9"/><path d="M350.6 24.4l3.3 3.3" stroke="#4a4a4a" stroke-width="1.3"/><path d="M346.6 19.8l-2 1.7l2 1.7zM348.2 19.8l2 1.7l-2 1.7z" fill="#111"/><rect x="359.2" y="26.3" width="9.3" height="1.3" fill="url(#gg)"/><text x="363.8" y="25" font-size="6.8" text-anchor="middle" fill="#111" font-family="Liberation Sans" font-weight="bold">1</text><rect x="375.3" y="24.1" width="9.3" height="3.5" fill="url(#gg)"/><text x="379.9" y="25" font-size="6.8" text-anchor="middle" fill="#111" font-family="Liberation Sans" font-weight="bold">2</text><rect x="391.3" y="22.3" width="9.3" height="5.3" fill="url(#gg)"/><text x="395.9" y="25" font-size="6.8" text-anchor="middle" fill="#111" font-family="Liberation Sans" font-weight="bold">3</text><rect x="407.6" y="20.7" width="9.3" height="6.9" fill="url(#gg)"/><text x="412.2" y="25" font-size="6.8" text-anchor="middle" fill="#111" font-family="Liberation Sans" font-weight="bold">4</text><rect x="423.7" y="19.0" width="9.3" height="8.6" fill="url(#gg)"/><text x="428.3" y="25" font-size="6.8" text-anchor="middle" fill="#111" font-family="Liberation Sans" font-weight="bold">5</text><rect x="439.6" y="17.4" width="9.3" height="10.2" fill="url(#gg)"/><text x="444.2" y="25" font-size="6.8" text-anchor="middle" fill="#111" font-family="Liberation Sans" font-weight="bold">6</text><path d="M454.7 15v15" stroke="#dcdcdc" stroke-width="0.6"/><rect x="457.0" y="16" width="0.9" height="0.9" fill="#8a8a8a"/><rect x="457.0" y="18" width="0.9" height="0.9" fill="#8a8a8a"/><rect x="457.0" y="20" width="0.9" height="0.9" fill="#8a8a8a"/><rect x="457.0" y="22" width="0.9" height="0.9" fill="#8a8a8a"/><path d="M456.5 24.5h2v2" stroke="#999" stroke-width="0.5" fill="none"/><text x="468.8" y="19.2" font-size="3.3" text-anchor="middle" fill="#333" font-family="Liberation Sans" letter-spacing="0.1">MODE</text><rect x="463" y="23.5" width="11" height="4.5" rx="1" fill="#fff" stroke="#333" stroke-width="0.8"/><path d="M466 23.5v-3l1-0.5l1 0.5v2l2-0.5l1.5 1.5" fill="#fff" stroke="#333" stroke-width="0.7"/><path d="M477 21.8h2.6l-1.3 1.4z" fill="#222"/><rect x="482.5" y="17.5" width="69" height="10.5" fill="#fff"/><path d="M547.2 22h2.6l-1.3 1.4z" fill="#222"/><path d="M556 18.2v6.6h6z" fill="#e4f0fb" stroke="#3a8ae0" stroke-width="0.8"/><path d="M567.6 17.6l-4.4 6.4" stroke="#555" stroke-width="1.1"/><rect x="555.5" y="25.8" width="12.6" height="2.2" fill="#8a8a8a"/><path d="M557 25.8v1M559 25.8v1M561 25.8v1M563 25.8v1M565 25.8v1" stroke="#ddd" stroke-width="0.4"/><path d="M571 23.2q6.2-6 12.4 0q-6.2 4.5-12.4 0z" fill="#fff" stroke="#333" stroke-width="0.8"/><circle cx="577.2" cy="22.7" r="1.9" fill="#333"/><circle cx="577.2" cy="22.7" r="0.8" fill="#3050b0"/><path d="M572 26.5l6-1.2" stroke="#333" stroke-width="0.6"/><rect x="589.5" y="20" width="9.5" height="7" fill="#f4ee1a" stroke="#6a6a20" stroke-width="0.6"/><path d="M590 17.5v3.6M588.2 19.3h3.6" stroke="#2ab02a" stroke-width="1"/><rect x="604.5" y="21.5" width="5" height="6.3" fill="#fff" stroke="#444" stroke-width="0.8"/><path d="M607 21v-3.2h3l1.3-0.8l1.3 0.8h1.4v10h-3" fill="none" stroke="#444" stroke-width="0.8"/><path d="M618.2 15v15" stroke="#dcdcdc" stroke-width="0.6"/><path d="M623 17.8h9.5l-3.8 4.6v4.8l-1.9-1v-3.8z" fill="#fff" stroke="#444" stroke-width="0.8" stroke-linejoin="round"/><path d="M657.4 22h2.6l-1.3 1.4z" fill="#222"/></svg><div class="t" style="left:485.2px;top:19.1px;font-size:7.5px;transform:scaleX(0.9);transform-origin:0 0;color:#111">Default</div><div class="t" style="left:636.4px;top:18.8px;font-size:7.2px;font-weight:bold;transform:scaleX(0.84);transform-origin:0 0;color:#3a3a4a">Filters</div><div class="ab" style="left:221px;top:31px;width:580px;height:374px;background:#fff"></div><div class="ab" style="left:219.8px;top:31px;width:1px;height:383px;background:#c9ced8"></div><svg class="ab" style="left:0;top:0" width="827" height="418" viewBox="0 0 827 418"><defs><linearGradient id="bg" x1="0" y1="0" x2="0" y2="1"><stop offset="0" stop-color="#000"/><stop offset="0.5" stop-color="#fff"/><stop offset="1" stop-color="#000"/></linearGradient><linearGradient id="bgs" x1="0" y1="0" x2="1" y2="0"><stop offset="0" stop-color="#000" stop-opacity="0.55"/><stop offset="0.25" stop-color="#000" stop-opacity="0"/><stop offset="0.75" stop-color="#000" stop-opacity="0"/><stop offset="1" stop-color="#000" stop-opacity="0.55"/></linearGradient><linearGradient id="rg" x1="0" y1="0" x2="0" y2="1"><stop offset="0" stop-color="#f00000"/><stop offset="0.18" stop-color="#ff2020"/><stop offset="0.55" stop-color="#ffd8d8"/><stop offset="0.72" stop-color="#ffe8e8"/><stop offset="0.745" stop-color="#ff8a8a"/><stop offset="0.86" stop-color="#ff1010"/><stop offset="1" stop-color="#e00000"/></linearGradient><clipPath id="dc"><rect x="221" y="32" width="580" height="372"/></clipPath><style>.bt{font-family:"Liberation Sans",sans-serif;font-weight:bold;font-size:8.5px;letter-spacing:0.28px;fill:#16161e;stroke:#16161e;stroke-width:0.2px}</style></defs><g clip-path="url(#dc)"><path d="M563 222 C578.03 164.06, 586.66 61.2, 596 10" fill="none" stroke="#5a5a5a" stroke-width="0.9"/><path d="M561 218 C592.47 141.49, 586.23 59.3, 613.98 59.3 H801" fill="none" stroke="#5a5a5a" stroke-width="0.9"/><path d="M548 218.4 H705" fill="none" stroke="#5a5a5a" stroke-width="0.9"/><path d="M561 218 C592.65 291.64, 584.32 376.4, 613.77 376.4 H705" fill="none" stroke="#5a5a5a" stroke-width="0.9"/><path d="M563 222 C579.72 274.82, 588.29 388, 596 430" fill="none" stroke="#5a5a5a" stroke-width="0.9"/><path d="M424.8 0 L436.5 70" fill="none" stroke="#5a5a5a" stroke-width="0.9"/><path d="M433 0 L440.5 70" fill="none" stroke="#5a5a5a" stroke-width="0.9"/><path d="M440 310 C420.17 389.13, 416.41 383.9, 404.6 383.9 H228" fill="none" stroke="#5a5a5a" stroke-width="0.9"/><path d="M446 297 L428 420" fill="none" stroke="#5a5a5a" stroke-width="0.9"/><rect x="222.6" y="388" width="2.9" height="26" fill="#dfe6ff" stroke="#777" stroke-width="0.6"/><circle cx="565.8" cy="99.7" r="8.5" fill="#eef4fa" stroke="#3a3a3a" stroke-width="0.9"/><path d="M558 96.4H574M558 102.6H574M567.2 91.3Q572.8 99.7 567.2 108.1" stroke="#3a3a3a" stroke-width="0.8" fill="none"/><rect x="649.2" y="44.8" width="12.0" height="29.0" rx="1.5" fill="url(#bg)"/><rect x="649.2" y="44.8" width="12.0" height="29.0" rx="1.5" fill="url(#bgs)"/><rect x="741.7" y="44.6" width="12.0" height="29.0" rx="1.5" fill="url(#bg)"/><rect x="741.7" y="44.6" width="12.0" height="29.0" rx="1.5" fill="url(#bgs)"/><rect x="611.9" y="74.0" width="86.2" height="34.6" fill="#fff" stroke="#606060" stroke-width="0.9"/><path d="M613.8 75.7h3.2v3.2h-3.2z M615.0 76.9h3.2v3.2h-3.2z" fill="#fff" stroke="#444" stroke-width="0.6"/><text x="654.9" y="95.3" text-anchor="middle" class="bt">Wear seatbelt</text><rect x="704.4" y="74.0" width="85.7" height="34.9" fill="#fff" stroke="#606060" stroke-width="0.9"/><path d="M706.3 75.8h3.2v3.2h-3.2z M707.5 77.0h3.2v3.2h-3.2z" fill="#fff" stroke="#444" stroke-width="0.6"/><text x="747.2" y="95.6" text-anchor="middle" class="bt">Airbag</text><rect x="795.9" y="74.0" width="29.1" height="34.9" fill="#fff" stroke="#606060" stroke-width="0.9"/><path d="M797.8 75.8h3.2v3.2h-3.2z M799.0 77.0h3.2v3.2h-3.2z" fill="#fff" stroke="#444" stroke-width="0.6"/><text x="810.4" y="95.6" text-anchor="middle" class="bt"></text><circle cx="655.3" cy="112.8" r="3.8" fill="#fff" stroke="#707070" stroke-width="0.8"/><path d="M653.3 112.8h4" stroke="#606060" stroke-width="0.9"/><path d="M655.3 116.6 C660 135, 680 138, 705 138 H801" fill="none" stroke="#5a5a5a" stroke-width="0.9"/><rect x="741.7" y="124.6" width="12.0" height="29.0" rx="1.5" fill="url(#bg)"/><rect x="741.7" y="124.6" width="12.0" height="29.0" rx="1.5" fill="url(#bgs)"/><rect x="704.4" y="153.2" width="85.7" height="36.7" fill="#fff" stroke="#606060" stroke-width="0.9"/><path d="M706.3 155.0h3.2v3.2h-3.2z M707.5 156.2h3.2v3.2h-3.2z" fill="#fff" stroke="#444" stroke-width="0.6"/><text x="747.2" y="166.9" text-anchor="middle" class="bt">Seatbelt</text><text x="747.2" y="175.7" text-anchor="middle" class="bt">awareness</text><text x="747.2" y="184.5" text-anchor="middle" class="bt">campaign</text><rect x="795.9" y="153.2" width="29.1" height="36.7" fill="#fff" stroke="#606060" stroke-width="0.9"/><path d="M797.8 155.0h3.2v3.2h-3.2z M799.0 156.2h3.2v3.2h-3.2z" fill="#fff" stroke="#444" stroke-width="0.6"/><text x="810.4" y="175.7" text-anchor="middle" class="bt"></text><rect x="649.0" y="203.6" width="12.0" height="29.0" rx="1.5" fill="url(#bg)"/><rect x="649.0" y="203.6" width="12.0" height="29.0" rx="1.5" fill="url(#bgs)"/><rect x="612.0" y="233.0" width="86.4" height="36.3" fill="#fff" stroke="#606060" stroke-width="0.9"/><path d="M613.9 234.8h3.2v3.2h-3.2z M615.1 236.0h3.2v3.2h-3.2z" fill="#fff" stroke="#444" stroke-width="0.6"/><text x="655.1" y="246.5" text-anchor="middle" class="bt">No protrusions on</text><text x="655.1" y="255.3" text-anchor="middle" class="bt">front or side of</text><text x="655.1" y="264.1" text-anchor="middle" class="bt">vehicle</text><circle cx="655.3" cy="272.9" r="3.8" fill="#fff" stroke="#707070" stroke-width="0.8"/><path d="M653.3 272.9h4" stroke="#606060" stroke-width="0.9"/><path d="M655.3 276.7 C660 295, 680 297.8, 705 297.8 H801" fill="none" stroke="#5a5a5a" stroke-width="0.9"/><rect x="704.2" y="204.2" width="86.6" height="55.3" rx="2" fill="url(#rg)" stroke="#a00000" stroke-width="0.6"/><rect x="707.2" y="207.2" width="80.6" height="38.3" fill="#fff" stroke="#505050" stroke-width="0.6"/><path d="M709.2 239.0h3.2v3.2h-3.2z M710.4 240.2h3.2v3.2h-3.2z" fill="#fff" stroke="#444" stroke-width="0.6"/><text x="747.5" y="219.8" text-anchor="middle" class="bt">Hitting a</text><text x="747.5" y="229.0" text-anchor="middle" class="bt">pedestrian/</text><text x="747.5" y="238.2" text-anchor="middle" class="bt">cyclist</text><rect x="726.2" y="248.4" width="10.4" height="9.5" fill="#e8801a"/><text x="731.4" y="254.9" text-anchor="middle" font-size="4.6" fill="#333" font-family="Liberation Sans">C4</text><rect x="736.6" y="248.4" width="10.4" height="9.5" fill="#f2ee1c"/><text x="741.8" y="254.9" text-anchor="middle" font-size="4.6" fill="#333" font-family="Liberation Sans">C1</text><rect x="747.0" y="248.4" width="10.4" height="9.5" fill="#18d018"/><text x="752.2" y="254.9" text-anchor="middle" font-size="4.6" fill="#333" font-family="Liberation Sans">C0</text><rect x="757.4" y="248.4" width="10.4" height="9.5" fill="#f2ee1c"/><text x="762.6" y="254.9" text-anchor="middle" font-size="4.6" fill="#333" font-family="Liberation Sans">C2</text><circle cx="704.2" cy="218.6" r="3.8" fill="#fff" stroke="#707070" stroke-width="0.8"/><path d="M702.2 218.6h4" stroke="#606060" stroke-width="0.9"/><rect x="741.6" y="283.4" width="12.0" height="29.0" rx="1.5" fill="url(#bg)"/><rect x="741.6" y="283.4" width="12.0" height="29.0" rx="1.5" fill="url(#bgs)"/><rect x="704.4" y="312.6" width="85.7" height="34.9" fill="#fff" stroke="#606060" stroke-width="0.9"/><path d="M706.3 314.4h3.2v3.2h-3.2z M707.5 315.6h3.2v3.2h-3.2z" fill="#fff" stroke="#444" stroke-width="0.6"/><text x="747.2" y="329.8" text-anchor="middle" class="bt">Warning system</text><text x="747.2" y="338.6" text-anchor="middle" class="bt">vehicle lights</text><rect x="795.9" y="312.6" width="29.1" height="34.9" fill="#fff" stroke="#606060" stroke-width="0.9"/><path d="M797.8 314.4h3.2v3.2h-3.2z M799.0 315.6h3.2v3.2h-3.2z" fill="#fff" stroke="#444" stroke-width="0.6"/><text x="810.4" y="334.2" text-anchor="middle" class="bt"></text><rect x="648.9" y="361.8" width="12.0" height="29.0" rx="1.5" fill="url(#bg)"/><rect x="648.9" y="361.8" width="12.0" height="29.0" rx="1.5" fill="url(#bgs)"/><rect x="611.9" y="391.2" width="86.3" height="17.1" fill="#fff" stroke="#606060" stroke-width="0.9"/><path d="M613.8 393.0h3.2v3.2h-3.2z M615.0 394.2h3.2v3.2h-3.2z" fill="#fff" stroke="#444" stroke-width="0.6"/><text x="655.0" y="403.9" text-anchor="middle" class="bt">Competence in</text><rect x="703.7" y="361.6" width="87.0" height="55.3" rx="2" fill="url(#rg)" stroke="#a00000" stroke-width="0.6"/><rect x="706.7" y="364.6" width="81.0" height="38.3" fill="#fff" stroke="#505050" stroke-width="0.6"/><path d="M708.7 396.4h3.2v3.2h-3.2z M709.9 397.6h3.2v3.2h-3.2z" fill="#fff" stroke="#444" stroke-width="0.6"/><text x="747.2" y="376.5" text-anchor="middle" class="bt">Crash into deep</text><text x="747.2" y="385.7" text-anchor="middle" class="bt">water resulting</text><text x="747.2" y="394.9" text-anchor="middle" class="bt">in entrapment</text><circle cx="703.7" cy="376.5" r="3.8" fill="#fff" stroke="#707070" stroke-width="0.8"/><path d="M701.7 376.5h4" stroke="#606060" stroke-width="0.9"/><rect x="200.4" y="320.4" width="24.8" height="35.3" fill="#fff" stroke="#606060" stroke-width="0.9"/><text x="212.8" y="342.2" text-anchor="middle" class="bt"></text><path d="M222.3 320 V356" fill="none" stroke="#aaa" stroke-width="0.5"/><rect x="231.2" y="320.4" width="86.3" height="33.8" fill="#fff" stroke="#606060" stroke-width="0.9"/><text x="274.4" y="341.5" text-anchor="middle" class="bt"></text><rect x="323.4" y="320.4" width="86.7" height="33.8" fill="#fff" stroke="#606060" stroke-width="0.9"/><text x="366.8" y="341.5" text-anchor="middle" class="bt"></text><path d="M215 370.8 H222 Q224.2 370.8 224.2 373 V382" fill="none" stroke="#0000ee" stroke-width="2.6"/><rect x="269.0" y="370.0" width="11.6" height="28.5" rx="1.5" fill="url(#bg)"/><rect x="269.0" y="370.0" width="11.6" height="28.5" rx="1.5" fill="url(#bgs)"/><rect x="361.0" y="370.0" width="11.6" height="28.5" rx="1.5" fill="url(#bg)"/><rect x="361.0" y="370.0" width="11.6" height="28.5" rx="1.5" fill="url(#bgs)"/><circle cx="225.2" cy="384.6" r="3.8" fill="#fff" stroke="#707070" stroke-width="0.8"/><path d="M223.2 384.6h4" stroke="#606060" stroke-width="0.9"/><rect x="231.2" y="399.2" width="86.3" height="29.1" fill="#fff" stroke="#606060" stroke-width="0.9"/><path d="M233.2 401.0h3.2v3.2h-3.2z M234.4 402.2h3.2v3.2h-3.2z" fill="#fff" stroke="#444" stroke-width="0.6"/><text x="274.4" y="417.9" text-anchor="middle" class="bt"></text><rect x="323.4" y="399.2" width="86.7" height="29.1" fill="#fff" stroke="#606060" stroke-width="0.9"/><path d="M325.4 401.0h3.2v3.2h-3.2z M326.6 402.2h3.2v3.2h-3.2z" fill="#fff" stroke="#444" stroke-width="0.6"/><text x="366.8" y="417.9" text-anchor="middle" class="bt"></text><path d="M231 31 H318 V35.3 Q318 37.3 316 37.3 H233 Q231 37.3 231 35.3 Z" fill="#0000f0"/><rect x="268.7" y="42.4" width="11.6" height="29.0" rx="1.5" fill="url(#bg)"/><rect x="268.7" y="42.4" width="11.6" height="29.0" rx="1.5" fill="url(#bgs)"/><rect x="361.2" y="42.5" width="11.4" height="29.0" rx="1.5" fill="url(#bg)"/><rect x="361.2" y="42.5" width="11.4" height="29.0" rx="1.5" fill="url(#bgs)"/></g></svg><div class="ab" style="left:221px;top:31px;width:580px;height:1.4px;background:#d6d6d6"></div><div class="ab" style="left:800.7px;top:31px;width:10px;height:374px;background:#f0f0f0"></div><div class="ab" style="left:801.5px;top:125.4px;width:7.5px;height:163.2px;background:#cdcdcd"></div><svg class="ab" style="left:802px;top:35px" width="7" height="5" viewBox="0 0 7 5"><path d="M1 4L3.5 1.2L6 4" stroke="#555" stroke-width="0.9" fill="none"/></svg><svg class="ab" style="left:802px;top:396px" width="7" height="5" viewBox="0 0 7 5"><path d="M1 1L3.5 3.8L6 1" stroke="#555" stroke-width="0.9" fill="none"/></svg><div class="ab" style="left:810px;top:31px;width:1.5px;height:384px;background:#dfe3ea"></div><div class="ab" style="left:221px;top:404.5px;width:590px;height:9px;background:#f0f0f0"></div><div class="ab" style="left:445px;top:405px;width:251px;height:8px;background:#cdcdcd"></div><svg class="ab" style="left:224px;top:406px" width="5" height="6" viewBox="0 0 5 6"><path d="M4 0.5L1 3L4 5.5" stroke="#555" stroke-width="1" fill="none"/></svg><svg class="ab" style="left:792px;top:406px" width="5" height="6" viewBox="0 0 5 6"><path d="M1 0.5L4 3L1 5.5" stroke="#555" stroke-width="1" fill="none"/></svg><div class="ab" style="left:221px;top:413.5px;width:590px;height:1.5px;background:#fcfcfc"></div><div class="ab" style="left:704px;top:413.6px;width:86.6px;height:1.2px;background:#f01010"></div><div class="ab" style="left:221px;top:413.4px;width:5px;height:1.4px;background:#3030f0"></div><div class="ab" style="left:248px;top:413.7px;width:50px;height:0.9px;background:repeating-linear-gradient(90deg,#333 0 1.2px,transparent 1.2px 4px)"></div><div class="ab" style="left:340px;top:413.7px;width:62px;height:0.9px;background:repeating-linear-gradient(90deg,#333 0 1.2px,transparent 1.2px 4.5px)"></div><div class="ab" style="left:812.3px;top:1.2px;width:14.7px;height:36.5px;background:#34446a"></div><div class="ab" style="left:816.6px;top:3px;writing-mode:vertical-rl;font-size:7.6px;line-height:8px;color:#d8dfeb;white-space:nowrap;transform:scaleY(0.86);transform-origin:0 0">Scrap Book</div><div class="ab" style="left:155.2px;top:51.4px;width:412.8px;height:296px;background:#f0f0f0;border:1.2px solid #6aaae6"></div><div class="ab" style="left:156.4px;top:52.6px;width:410.4px;height:16.4px;background:#fff"></div><div class="t" style="left:160.8px;top:56.8px;font-size:7.6px;transform:scaleX(0.86);transform-origin:0 0;color:#1a1a1a">Edit System</div><svg class="ab" style="left:554px;top:56px" width="8" height="8" viewBox="0 0 8 8"><path d="M1 1L7 7M7 1L1 7" stroke="#222" stroke-width="0.8"/></svg><div class="ab" style="left:156.4px;top:69px;width:410.4px;height:1.3px;background:#8c8c8c"></div><div class="ab" style="left:156.4px;top:70.3px;width:410.4px;height:11px;background:#f0f0f0"></div><div class="ab" style="left:157px;top:82px;width:407.5px;height:245.5px;background:#fff;border:0.7px solid #dadada"></div><div class="ab" style="left:156.4px;top:70.3px;width:1.2px;height:257px;background:#5f6f8a"></div><div class="ab" style="left:187.3px;top:71.8px;width:43.599999999999994px;height:10.4px;background:#e8e8e8;border:0.6px solid #d6d6d6"></div><div class="t" style="left:190.10000000000002px;top:74.5px;font-size:7.1px;transform:scaleX(0.85);transform-origin:0 0;color:#111">Online Criteria</div><div class="ab" style="left:230.9px;top:71.8px;width:23.900000000000006px;height:10.4px;background:#e8e8e8;border:0.6px solid #d6d6d6"></div><div class="t" style="left:233.70000000000002px;top:74.5px;font-size:7.1px;transform:scaleX(0.85);transform-origin:0 0;color:#111">Parts</div><div class="ab" style="left:254.8px;top:71.8px;width:51.5px;height:10.4px;background:#e8e8e8;border:0.6px solid #d6d6d6"></div><div class="t" style="left:257.6px;top:74.5px;font-size:7.1px;transform:scaleX(0.85);transform-origin:0 0;color:#111">Document Links</div><div class="ab" style="left:306.3px;top:71.8px;width:36.80000000000001px;height:10.4px;background:#e8e8e8;border:0.6px solid #d6d6d6"></div><div class="t" style="left:309.1px;top:74.5px;font-size:7.1px;transform:scaleX(0.85);transform-origin:0 0;color:#111">Objectives</div><div class="ab" style="left:343.1px;top:71.8px;width:59.89999999999998px;height:10.4px;background:#e8e8e8;border:0.6px solid #d6d6d6"></div><div class="t" style="left:345.90000000000003px;top:74.5px;font-size:7.1px;transform:scaleX(0.85);transform-origin:0 0;color:#111">Assigned to Barriers</div><div class="ab" style="left:403px;top:71.8px;width:33.19999999999999px;height:10.4px;background:#e8e8e8;border:0.6px solid #d6d6d6"></div><div class="t" style="left:405.8px;top:74.5px;font-size:7.1px;transform:scaleX(0.85);transform-origin:0 0;color:#111">User Data</div><div class="ab" style="left:157.6px;top:70.4px;width:29.6px;height:12.2px;background:#fff;border-top:0.6px solid #d6d6d6;border-right:0.6px solid #d6d6d6"></div><div class="t" style="left:161.8px;top:73.6px;font-size:7.1px;transform:scaleX(0.85);transform-origin:0 0;color:#111">General</div><div class="t" style="left:163.8px;top:86.5px;font-size:7.1px;transform:scaleX(0.85);transform-origin:0 0;color:#111">Code</div><div class="t" style="left:163.8px;top:100.9px;font-size:7.1px;transform:scaleX(0.85);transform-origin:0 0;color:#111">Name</div><div class="t" style="left:163.8px;top:114.7px;font-size:7.1px;transform:scaleX(0.85);transform-origin:0 0;color:#111">Category</div><div class="t" style="left:163.8px;top:129px;font-size:7.1px;transform:scaleX(0.85);transform-origin:0 0;color:#111">Type</div><div class="t" style="left:163.8px;top:143.4px;font-size:7.1px;transform:scaleX(0.85);transform-origin:0 0;color:#111">Responsible</div><div class="t" style="left:163.8px;top:157.8px;font-size:7.1px;transform:scaleX(0.85);transform-origin:0 0;color:#111">Description</div><div class="t" style="left:164.4px;top:174.5px;font-size:7.1px;transform:scaleX(0.85);transform-origin:0 0;color:#2020e0"><span style="text-decoration:underline">(edit in popup)</span></div><div class="t" style="left:164.4px;top:260.6px;font-size:7.1px;transform:scaleX(0.85);transform-origin:0 0;color:#111">Colors and pattern</div><div class="ab" style="left:250.3px;top:86.2px;width:310.3px;height:11px;background:#fff;border:1px solid #5aa2e2"></div><div class="ab" style="left:252px;top:88px;width:17px;height:7px;background:#3078d8"></div><div class="t" style="left:252.4px;top:88.7px;font-size:7.1px;transform:scaleX(0.78);transform-origin:0 0;color:#fff">GSYS</div><div class="ab" style="left:250.3px;top:100.2px;width:310.3px;height:11px;background:#fff;border:0.8px solid #a8a8a8"></div><div class="t" style="left:252.6px;top:102.6px;font-size:7.1px;transform:scaleX(0.85);transform-origin:0 0;color:#111">Generic Systems</div><div class="ab" style="left:250.3px;top:113.6px;width:310.3px;height:11.6px;background:#e1e1e1;border:0.8px solid #c4c4c4"></div><div class="t" style="left:252.8px;top:116.3px;font-size:7.1px;transform:scaleX(0.85);transform-origin:0 0;color:#111">&lt;No Value Assigned&gt;</div><svg class="ab" style="left:552px;top:117.6px" width="6" height="4" viewBox="0 0 6 4"><path d="M0.6 0.6L3 3L5.4 0.6" stroke="#555" stroke-width="0.8" fill="none"/></svg><div class="ab" style="left:250.3px;top:128.3px;width:310.3px;height:11.6px;background:#e1e1e1;border:0.8px solid #c4c4c4"></div><div class="t" style="left:252.8px;top:131.0px;font-size:7.1px;transform:scaleX(0.85);transform-origin:0 0;color:#111">&lt;No Value Assigned&gt;</div><svg class="ab" style="left:552px;top:132.3px" width="6" height="4" viewBox="0 0 6 4"><path d="M0.6 0.6L3 3L5.4 0.6" stroke="#555" stroke-width="0.8" fill="none"/></svg><div class="ab" style="left:250.3px;top:142.7px;width:310.3px;height:11.6px;background:#e1e1e1;border:0.8px solid #c4c4c4"></div><div class="t" style="left:252.8px;top:145.39999999999998px;font-size:7.1px;transform:scaleX(0.85);transform-origin:0 0;color:#111">&lt;No Value Assigned&gt;</div><svg class="ab" style="left:552px;top:146.7px" width="6" height="4" viewBox="0 0 6 4"><path d="M0.6 0.6L3 3L5.4 0.6" stroke="#555" stroke-width="0.8" fill="none"/></svg><div class="ab" style="left:250.2px;top:157.2px;width:310.4px;height:86.4px;background:#fff;border:0.8px solid #a8a8a8"></div><div class="t" style="left:252.4px;top:159.2px;font-size:7.1px;transform:scaleX(0.85);transform-origin:0 0;color:#111">A list of generic systems for use on your bowties</div><div class="ab" style="left:550.4px;top:158px;width:9.4px;height:84.8px;background:#f0f0f0"></div><svg class="ab" style="left:552px;top:160px" width="6" height="4" viewBox="0 0 6 4"><path d="M0.6 3.4L3 1L5.4 3.4" stroke="#aaa" stroke-width="0.7" fill="none"/></svg><svg class="ab" style="left:552px;top:237px" width="6" height="4" viewBox="0 0 6 4"><path d="M0.6 0.6L3 3L5.4 0.6" stroke="#aaa" stroke-width="0.7" fill="none"/></svg><div class="ab" style="left:250.3px;top:247.2px;width:12.7px;height:30.8px;background:linear-gradient(#f7a600,#ffff00 62%,#f0a000);border-left:1.2px solid #8a8a8a;border-top:0.6px solid #aaa"></div><div class="ab" style="left:267.9px;top:247.2px;width:66.9px;height:30.8px;background:#ffa000"></div><div class="t" style="left:283px;top:261.2px;font-size:7.1px;transform:scaleX(0.85);transform-origin:0 0;color:#222">Example Text</div><div class="ab" style="left:339.7px;top:256.7px;width:67.8px;height:12px;background:#e1e1e1;border:0.8px solid #adadad"></div><div class="t" style="left:359px;top:260.3px;font-size:7.1px;transform:scaleX(0.85);transform-origin:0 0;color:#111">Choose...</div><div class="ab" style="left:156.4px;top:327.5px;width:410.4px;height:18.7px;background:#f0f0f0"></div><svg class="ab" style="left:159px;top:334px" width="10" height="9" viewBox="0 0 10 9"><circle cx="4.6" cy="4.4" r="3.8" fill="#fff" stroke="#333" stroke-width="0.8"/><path d="M6.6 4.4H2.8M4.6 2.6L2.8 4.4L4.6 6.2" stroke="#333" stroke-width="0.8" fill="none"/></svg><div class="ab" style="left:389.8px;top:330px;width:54px;height:16.3px;background:#cccccc"></div><div class="t" style="left:411.5px;top:335.9px;font-size:7.1px;transform:scaleX(0.85);transform-origin:0 0;color:#a0a0a0">OK</div><div class="ab" style="left:450.4px;top:330px;width:53.1px;height:16.3px;background:#e1e1e1;border:0.8px solid #adadad"></div><div class="t" style="left:466px;top:335.9px;font-size:7.1px;transform:scaleX(0.85);transform-origin:0 0;color:#111">Cancel</div><div class="ab" style="left:510.2px;top:330px;width:54.2px;height:16.3px;background:#cccccc"></div><div class="t" style="left:529px;top:335.9px;font-size:7.1px;transform:scaleX(0.85);transform-origin:0 0;color:#a0a0a0">Apply</div></body></html>
